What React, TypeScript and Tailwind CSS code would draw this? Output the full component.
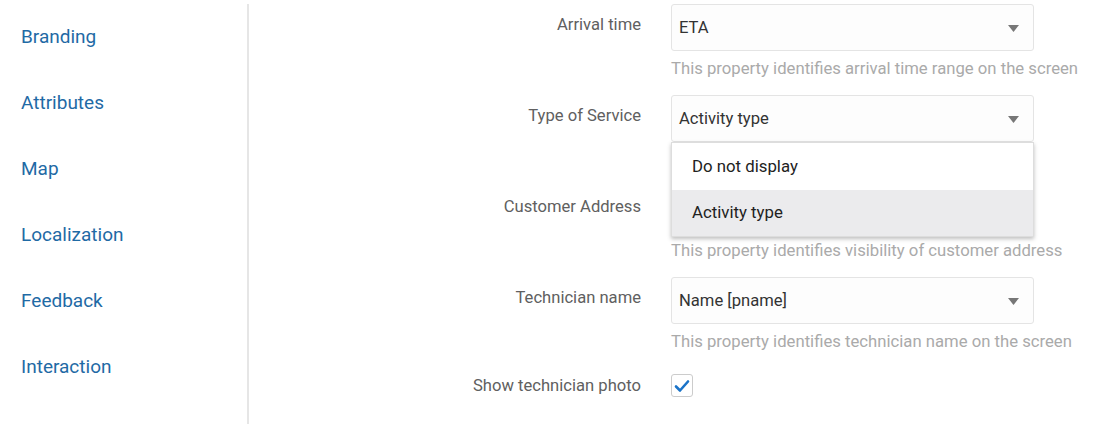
import { ReactNode } from "react"

const navItems = ["Branding", "Attributes", "Map", "Localization", "Feedback", "Interaction"]

function Arrow() {
  return (
    <svg width="11" height="7" viewBox="0 0 11 7" className="shrink-0">
      <path d="M0 0 L11 0 L5.5 7 Z" fill="#777" />
    </svg>
  )
}

function Select({ value, children }: { value: string; children?: ReactNode }) {
  return (
    <div className="relative w-[363px]">
      <div className="flex h-[47px] items-center justify-between rounded-[3px] border border-[#e4e4e4] bg-[#fdfdfd] pl-[7px] pr-[14px] pt-[2px] text-[16.6px] text-[#333]">
        <span>{value}</span>
        <Arrow />
      </div>
      {children}
    </div>
  )
}

function Row({ label, children, help }: { label: string; children: ReactNode; help?: string }) {
  return (
    <div className="flex">
      <div className="w-[392px] shrink-0 pt-[11px] text-right text-[16.6px] leading-[20px] text-[#606060]">{label}</div>
      <div className="ml-[30px]">
        {children}
        {help && <div className="mt-[8px] whitespace-nowrap text-[16.7px] leading-[20px] text-[#aaa]">{help}</div>}
      </div>
    </div>
  )
}

export default function App() {
  return (
    <div className="flex h-[424px] overflow-hidden bg-white" style={{ fontFamily: "Roboto, 'Liberation Sans', sans-serif" }}>
      <div className="mt-1 w-[249px] shrink-0 border-r-2 border-[#e6e6e6]">
        {navItems.map((item) => (
          <div key={item} className="flex h-[66px] items-center pl-[21px] text-[19px] text-[#1f6aa5]">
            {item}
          </div>
        ))}
      </div>
      <div className="flex flex-col gap-[16px] pt-1">
        <Row label="Arrival time" help="This property identifies arrival time range on the screen">
          <Select value="ETA" />
        </Row>
        <Row label="Type of Service">
          <Select value="Activity type">
            <div className="absolute left-0 top-[47px] z-10 w-full border border-[#ddd] bg-white shadow-[0_2px_4px_rgba(0,0,0,0.25)]">
              <div className="flex h-[47px] items-center pl-[20px] text-[16.8px] text-[#222]">Do not display</div>
              <div className="flex h-[46px] items-center bg-[#ebebed] pl-[20px] text-[16.8px] text-[#222]">Activity type</div>
            </div>
          </Select>
          <div className="h-[28px]" />
        </Row>
        <Row label="Customer Address" help="This property identifies visibility of customer address">
          <Select value="" />
        </Row>
        <Row label="Technician name" help="This property identifies technician name on the screen">
          <Select value="Name [pname]" />
        </Row>
        <div className="flex items-center pt-[6px]">
          <div className="w-[392px] shrink-0 text-right text-[16.6px] leading-[20px] text-[#606060]">Show technician photo</div>
          <div className="ml-[30px] flex h-[23px] w-[22px] items-center justify-center rounded-[3px] border border-[#ccc] bg-white">
            <svg width="16" height="14" viewBox="0 0 16 14">
              <path d="M2 7.5 L6 11.5 L14 2.5" fill="none" stroke="#1a73c8" strokeWidth="2.6" strokeLinecap="round" strokeLinejoin="round" />
            </svg>
          </div>
        </div>
      </div>
    </div>
  )
}
